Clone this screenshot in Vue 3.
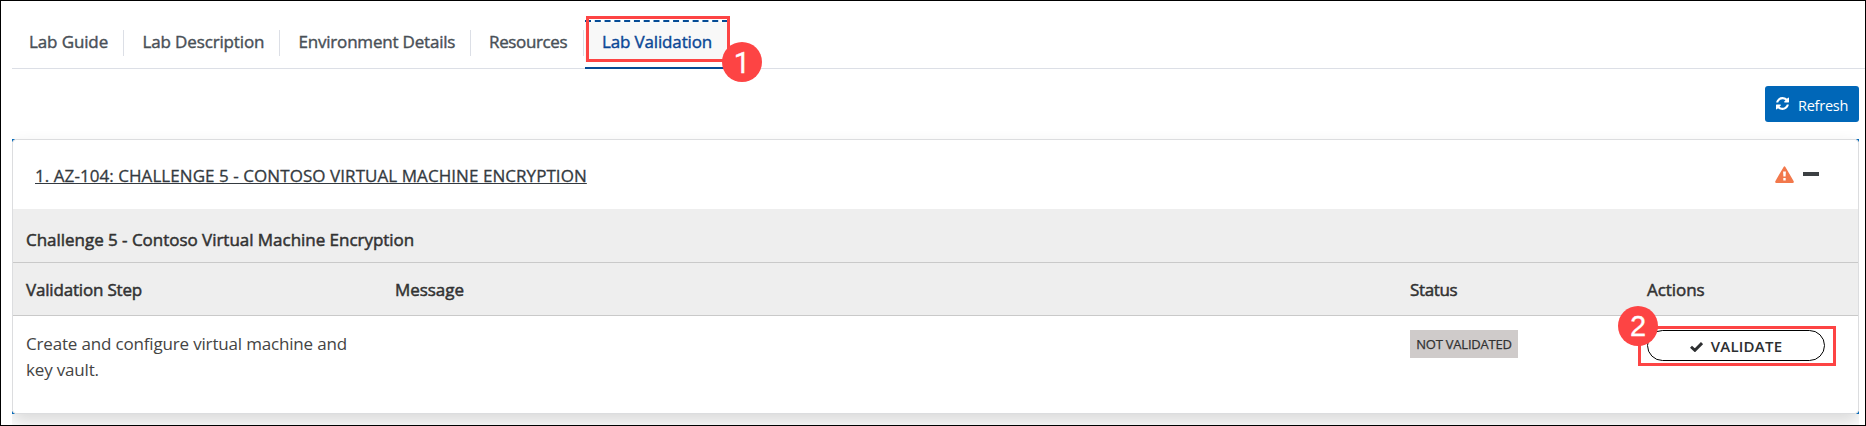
<script setup>
const tabs = [
  { id: 'guide', label: 'Lab Guide' },
  { id: 'description', label: 'Lab Description' },
  { id: 'environment', label: 'Environment Details' },
  { id: 'resources', label: 'Resources' },
  { id: 'validation', label: 'Lab Validation', active: true },
]
</script>

<template>
  <div class="page">
    <nav class="tabs">
      <div v-for="t in tabs" :key="t.id" class="tab" :class="[t.id, { active: t.active }]">
        <span class="tab-label">{{ t.label }}</span>
        <template v-if="t.active">
          <span class="mark mark-tab"></span>
          <span class="num num-one">1</span>
        </template>
      </div>
    </nav>

    <div class="content">
      <div class="toolbar">
        <button class="refresh">
          <svg class="sync" viewBox="0 0 1536 1536" width="13" height="13">
            <path fill="#fff" d="M1511 928q0 5-1 7-64 268-268 434.500T764 1536q-146 0-282.500-55T238 1324l-129 129q-19 19-45 19t-45-19-19-45V960q0-26 19-45t45-19h448q26 0 45 19t19 45-19 45l-137 137q71 66 161 102t187 36q134 0 250-65t186-179q11-17 53-117 8-23 30-23h192q13 0 22.500 9.500t9.500 22.500zM1536 128v448q0 26-19 45t-45 19h-448q-26 0-45-19t-19-45 19-45l138-138Q969 256 768 256q-134 0-250 65T332 500q-11 17-53 117-8 23-30 23H50q-13 0-22.500-9.500T18 608v-7q65-268 270-434.500T768 0q146 0 284 55.500T1297 212l130-129q19-19 45-19t45 19 19 45z" />
          </svg>
          <span>Refresh</span>
        </button>
      </div>

      <div class="card-frame">
        <div class="card-shell">
          <section class="card">
            <header class="card-head">
              <h2 class="title">1. AZ-104: CHALLENGE 5 - CONTOSO VIRTUAL MACHINE ENCRYPTION</h2>
              <div class="state">
                <svg width="19" height="17" viewBox="0 0 19 17">
                  <path fill="#f2784b" fill-rule="evenodd" d="M8.600.9Q9.500-.5 10.400.9L18.700 15.200Q19.200 16.900 17.600 17H1.400Q-.2 16.900.3 15.200ZM8.100 5.500 8.400 10.600H10.600L10.900 5.500ZM8.300 12V14.400H10.700V12Z" />
                </svg>
                <span class="minus"></span>
              </div>
            </header>
            <div class="group">Challenge 5 - Contoso Virtual Machine Encryption</div>
            <div class="row cols">
              <div class="step">Validation Step</div>
              <div class="message">Message</div>
              <div class="status">Status</div>
              <div class="actions">Actions</div>
            </div>
            <div class="row body">
              <div class="desc">Create and configure virtual machine and<br />key vault.</div>
              <div></div>
              <div><span class="badge">NOT VALIDATED</span></div>
              <div class="action">
                <button class="validate">
                  <svg width="13" height="10" viewBox="0 0 13 10">
                    <path fill="none" stroke="#2d2f31" stroke-width="2.900" d="M1 4.700 4.900 8.300 12 1.100" />
                  </svg>
                  <span>VALIDATE</span>
                </button>
                <span class="mark mark-action"></span>
                <span class="num num-two">2</span>
              </div>
            </div>
          </section>
        </div>
      </div>
    </div>
  </div>
</template>

<style>
body { margin: 0; background: #fff; }
</style>

<style scoped>
* { box-sizing: border-box; }
.page {
  width: 1866px;
  height: 426px;
  overflow: hidden;
  border: 1px solid #000;
  background: #fff;
  font-family: "Open Sans", "Noto Sans", sans-serif;
  font-size: 17px;
  color: #323232;
}
.tabs {
  display: flex;
  height: 49px;
  margin: 19px 0 0 11px;
  border-bottom: 1px solid #dcdfe6;
}
.tab {
  position: relative;
  height: 49px;
  padding: 10px 0 0 17px;
  color: #495057;
  line-height: 24px;
  white-space: nowrap;
  -webkit-text-stroke: 0.4px;
}
.tab:not(.active) {
  background: linear-gradient(#dcdfe6, #dcdfe6) right 10px / 1px 26px no-repeat;
}
.tab-label { display: block; }
.guide { width: 112px; letter-spacing: -0.120px; }
.description { width: 156px; letter-spacing: -0.140px; padding-left: 18.500px; }
.environment { width: 191px; letter-spacing: -0.200px; padding-left: 18.500px; }
.resources { width: 113px; letter-spacing: -0.360px; padding-left: 18px; }
.validation { width: 143px; letter-spacing: -0.150px; margin-left: 1px; }
.active {
  border: 2px dashed #054b95;
  border-left: 0;
  border-bottom: 2px solid #054b95;
  border-right-width: 1px;
  padding-top: 8px;
  background: linear-gradient(#f8f8f8, #f8f8f8) 0 0 / 100% 40px no-repeat;
  color: #0a4796;
}
.mark { position: absolute; border: 3px solid #fd4444; }
.mark-tab { left: 1px; top: -6px; width: 144px; height: 46px; }
.num {
  position: absolute;
  width: 40px;
  height: 40px;
  border-radius: 50%;
  background: #fd4444;
  color: #fff;
  font: 29px/40px "Liberation Sans", Arial, sans-serif;
  letter-spacing: 0;
  text-align: center;
  -webkit-text-stroke: 0.3px;
}
.num-one { left: 137px; top: 20px; font-family: Roboto, sans-serif; line-height: 42px; }
.content { padding: 17px 6px 0 11px; }
.toolbar { display: flex; justify-content: flex-end; }
.refresh {
  display: flex;
  align-items: center;
  width: 94px;
  height: 36px;
  padding: 0 0 0 11px;
  border: 0;
  border-radius: 3px;
  background: #0067b8;
  color: #fff;
  font: 14.500px/20px "Open Sans", sans-serif;
  letter-spacing: -0.250px;
}
.refresh span { margin: 4px 0 0 9px; }
.sync { margin-top: -1px; }
.card-frame { margin-top: 9px; padding: 8px 0 30px; overflow: hidden; }
.card-shell {
  height: 275px;
  background:
    linear-gradient(#0067b8, #0067b8) 0 0 / 3px 3px no-repeat,
    linear-gradient(#0067b8, #0067b8) 100% 0 / 3px 3px no-repeat,
    linear-gradient(#0067b8, #0067b8) 0 100% / 3px 3px no-repeat,
    linear-gradient(#0067b8, #0067b8) 100% 100% / 3px 3px no-repeat;
  box-shadow: 0 8px 16px rgba(0, 0, 0, 0.15);
}
.card {
  height: 275px;
  border: 1px solid #dcdddf;
  border-radius: 4px;
  background: #fff;
}
.card-head {
  display: flex;
  justify-content: space-between;
  height: 69px;
  padding: 24px 39px 0 22px;
}
.title {
  margin: 0;
  font-size: 17px;
  font-weight: 400;
  line-height: 24px;
  letter-spacing: 0.060px;
  color: #343a40;
  -webkit-text-stroke: 0.3px;
  text-decoration: underline;
  text-decoration-thickness: 1px;
  text-underline-offset: 1px;
  text-decoration-skip-ink: none;
}
.state { display: flex; align-items: flex-start; gap: 9px; padding-top: 2px; }
.minus { width: 16px; height: 4px; margin-top: 6px; background: #3c4043; }
.group {
  height: 54px;
  padding: 19px 0 0 13px;
  border-bottom: 1px solid #c9c9c9;
  background: #eee;
  line-height: 24px;
  letter-spacing: -0.030px;
  -webkit-text-stroke: 0.5px;
}
.row { display: grid; grid-template-columns: 369px 1015px 237px 1fr; padding-left: 13px; }
.cols {
  height: 53px;
  padding-top: 15px;
  border-bottom: 1px solid #c9c9c9;
  background: #eee;
  line-height: 24px;
  -webkit-text-stroke: 0.5px;
}
.step { letter-spacing: -0.180px; }
.message { letter-spacing: -0.050px; }
.status { letter-spacing: -0.350px; }
.actions { letter-spacing: -0.050px; }
.body { padding-top: 14px; }
.desc {
  padding-top: 1px;
  color: #444;
  line-height: 26px;
  letter-spacing: -0.170px;
}
.badge {
  display: block;
  width: 108px;
  height: 28px;
  background: #cfcbca;
  font-size: 13px;
  line-height: 28px;
  letter-spacing: -0.220px;
  text-align: center;
  -webkit-text-stroke: 0.25px;
}
.action { position: relative; }
.validate {
  display: flex;
  align-items: center;
  justify-content: center;
  gap: 8px;
  width: 178px;
  height: 31px;
  padding: 1px 0 0;
  border: 1px solid #000;
  border-radius: 16px;
  background: #fff;
  color: #2d2f31;
  font: 600 15px/20px "Open Sans", sans-serif;
  letter-spacing: 0.250px;
}
.validate span { margin-top: -1px; }
.validate svg { margin-top: 1px; }
.mark-action { left: -9px; top: -4px; width: 198px; height: 40px; }
.num-two { left: -29px; top: -24px; }
</style>
